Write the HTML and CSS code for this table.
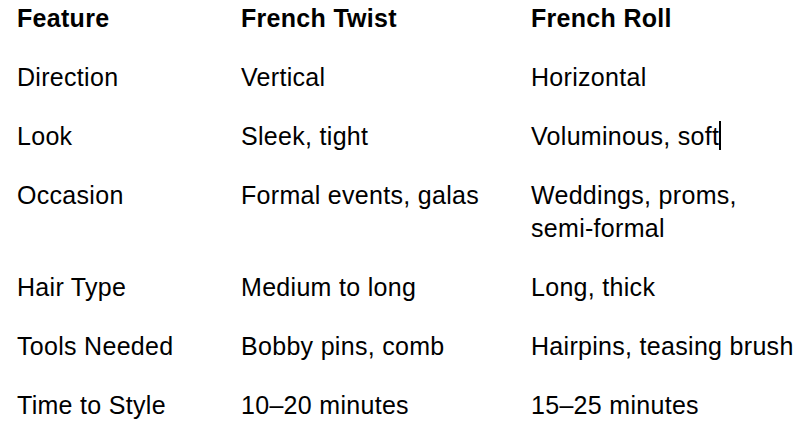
FILE: index.html
```html
<!DOCTYPE html>
<html lang="en">
<head>
<meta charset="utf-8">
<title>French Twist vs French Roll</title>
<link rel="stylesheet" href="styles.css">
</head>
<body>
<div class="table">
  <div class="cell head">Feature</div>
  <div class="cell head">French Twist</div>
  <div class="cell head">French Roll</div>

  <div class="cell">Direction</div>
  <div class="cell">Vertical</div>
  <div class="cell">Horizontal</div>

  <div class="cell">Look</div>
  <div class="cell">Sleek, tight</div>
  <div class="cell">Voluminous, soft<span class="caret"></span></div>

  <div class="cell">Occasion</div>
  <div class="cell">Formal events, galas</div>
  <div class="cell">Weddings, proms, <span class="nowrap">semi-formal</span></div>

  <div class="cell">Hair Type</div>
  <div class="cell">Medium to long</div>
  <div class="cell">Long, thick</div>

  <div class="cell">Tools Needed</div>
  <div class="cell">Bobby pins, comb</div>
  <div class="cell">Hairpins, teasing brush</div>

  <div class="cell">Time to Style</div>
  <div class="cell">10–20 minutes</div>
  <div class="cell">15–25 minutes</div>
</div>
</body>
</html>
```

FILE: styles.css
```css
html, body {
  margin: 0;
  padding: 0;
  background: #ffffff;
}

body {
  font-family: "Liberation Sans", Arial, sans-serif;
  font-size: 25px;
  line-height: 33px;
  letter-spacing: 0.3px;
  color: #000000;
}

.table {
  display: grid;
  grid-template-columns: 224px 290px 1fr;
  padding: 0 0 0 17px;
}

.cell {
  padding: 13px 0;
}

.head {
  font-weight: bold;
  padding-top: 2px;
}

.nowrap {
  white-space: nowrap;
}

.caret {
  display: inline-block;
  width: 2px;
  height: 29px;
  background: #000000;
  vertical-align: -5px;
}
```
